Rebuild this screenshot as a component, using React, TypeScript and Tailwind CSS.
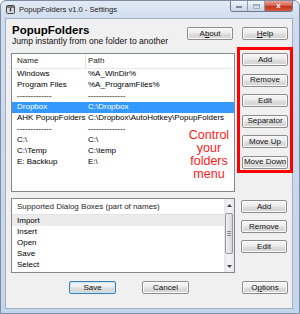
import type { ReactNode } from 'react';

const folders: [string, string][] = [
  ['Windows', '%A_WinDir%'],
  ['Program Files', '%A_ProgramFiles%'],
  ['-------------', '--------------'],
  ['Dropbox', 'C:\\Dropbox'],
  ['AHK PopupFolders', 'C:\\Dropbox\\AutoHotkey\\PopupFolders'],
  ['-------------', '--------------'],
  ['C:\\', 'C:\\'],
  ['C:\\Temp', 'C:\\temp'],
  ['E: Backkup', 'E:\\'],
];

const dialogs = ['Import', 'Insert', 'Open', 'Save', 'Select', 'Upload'];

function Btn({ children, className = '', primary = false }: { children: ReactNode; className?: string; primary?: boolean }) {
  return (
    <div
      className={`flex h-[13px] w-[46px] shrink-0 items-center justify-center rounded-[2px] border bg-[linear-gradient(#f6f6f6,#ececec_48%,#dedede_52%,#d2d2d2)] text-[8px] leading-none text-[#111] ${
        primary ? 'border-[#3c7fb1] shadow-[inset_0_0_0_1px_#c4e5f6]' : 'border-[#8c8c8c] shadow-[inset_0_0_0_1px_#fafafa]'
      } ${className}`}
    >
      {children}
    </div>
  );
}

function AppIcon() {
  return (
    <svg width="9" height="9" viewBox="0 0 9 9">
      <rect x="0.5" y="0.5" width="8" height="8" rx="1" fill="#d9d9d9" stroke="#444" />
      <rect x="1" y="1" width="7" height="2" fill="#7b7b7b" />
      <path d="M2.5 4.2 L4.5 4.2 L4.5 3.6 L6.5 4.8 L4.5 6 L4.5 5.4 L2.5 5.4 Z" fill="#333" transform="rotate(90 4.5 4.8)" />
    </svg>
  );
}

export default function App() {
  return (
    <div className="h-[314px] w-[300px] bg-white font-['Liberation_Sans',Arial,sans-serif] text-black">
      <div className="flex h-full w-full flex-col rounded-t-[6px] border border-[#7d8da4] bg-[linear-gradient(180deg,#e2eaf5_0px,#cfdced_18px,#c4d6eb_100%)]">
        {/* title bar */}
        <div className="flex h-[17px] shrink-0 items-center pl-[5px] pr-[6px]">
          <AppIcon />
          <span className="ml-[4px] text-[7.6px] leading-none text-[#1a1a1a]">PopupFolders v1.0 - Settings</span>
          <div className="ml-auto flex h-[11px] self-start overflow-hidden rounded-b-[3px] border border-t-0 border-[#6a7890]">
            <div className="flex w-[17px] items-end justify-center border-r border-[#8e9cb1] bg-[linear-gradient(#f1f5fa,#dbe4ef_50%,#cbd7e6)] pb-[3px]">
              <div className="h-[2px] w-[6px] border border-[#7d8898] bg-white" />
            </div>
            <div className="flex w-[17px] items-center justify-center border-r border-[#8e9cb1] bg-[linear-gradient(#f1f5fa,#dbe4ef_50%,#cbd7e6)]">
              <div className="h-[5px] w-[7px] border border-[#a4afbe] border-t-2" />
            </div>
            <div className="flex w-[27px] items-center justify-center bg-[linear-gradient(#e9a79b,#d4614f_45%,#c1351f_55%,#d65a3e)] text-[8px] font-bold leading-none text-white">
              x
            </div>
          </div>
        </div>

        {/* client area */}
        <div className="mb-[4px] ml-[4px] mr-[6px] flex flex-1 flex-col border border-[#9fb0c5] bg-[#f0f0f0] pl-[5px] pr-[4px]">
          <div className="flex h-[34px] shrink-0 justify-between">
            <div className="pl-[1px]">
              <div className="mt-[5px] text-[11.5px] font-bold leading-[12px]">PopupFolders</div>
              <div className="text-[8.6px] leading-[10px] text-[#111]">Jump instantly from one folder to another</div>
            </div>
            <div className="flex gap-[9px] pt-[8px]">
              <Btn className="h-[12px] w-[23px]">
                A<span className="underline">b</span>out
              </Btn>
              <Btn className="h-[12px]">
                <span className="underline">H</span>elp
              </Btn>
            </div>
          </div>

          {/* folders list */}
          <div className="flex h-[139px] shrink-0 items-start gap-[7px]">
            <div className="relative h-full w-[224px] overflow-hidden border border-[#828790] bg-white text-[8px] leading-none">
              <div className="flex h-[14.5px] items-center border-b border-[#e8e8e8] text-[#1e1e1e]">
                <div className="w-[73px] pl-[5px]">Name</div>
                <div className="h-full w-px bg-[#e3e3e3]" />
                <div className="pl-[2px]">Path</div>
              </div>
              {folders.map(([name, path], i) => (
                <div
                  key={i}
                  className={`flex h-[11px] items-center whitespace-nowrap ${i === 3 ? 'bg-[#3399ff] text-white' : ''}`}
                >
                  <div className="w-[76px] shrink-0 pl-[5px]">{name}</div>
                  <div>{path}</div>
                </div>
              ))}
              <div className="absolute left-[170px] top-[75px] w-[54px] text-center text-[12.5px] leading-[13px] text-[#ff1a1a]">
                Control your folders menu
              </div>
            </div>
            <div className="relative flex flex-col gap-[7.5px]">
              <div className="absolute -bottom-[4.5px] -left-[5px] -right-[5px] -top-[6px] border-[3px] border-[#ff0000]" />
              <Btn>Add</Btn>
              <Btn>Remove</Btn>
              <Btn>Edit</Btn>
              <Btn>Separator</Btn>
              <Btn>Move Up</Btn>
              <Btn>Move Down</Btn>
            </div>
          </div>

          {/* dialogs list */}
          <div className="mt-[6px] flex h-[75px] shrink-0 gap-[6px]">
            <div className="flex w-[224px] overflow-hidden border border-[#828790] bg-white text-[8px] leading-none">
              <div className="flex-1 overflow-hidden">
                <div className="flex h-[16px] items-center border-b border-[#e3e3e3] pl-[5px] text-[#1e1e1e]">
                  Supported Dialog Boxes (part of names)
                </div>
                {dialogs.map((d, i) => (
                  <div key={d} className={`flex h-[11px] items-center pl-[5px] ${i === 0 ? 'bg-[#ebebeb]' : ''}`}>
                    {d}
                  </div>
                ))}
              </div>
              <div className="flex w-[10px] flex-col bg-[linear-gradient(90deg,#e6e6e6,#f5f5f5_50%,#e6e6e6)]">
                <div className="flex h-[12px] items-center justify-center">
                  <svg width="5" height="3" viewBox="0 0 5 3">
                    <path d="M0 3 L2.5 0 L5 3 Z" fill="#444" />
                  </svg>
                </div>
                <div className="mx-[1px] mt-[2px] flex h-[41px] flex-col items-center justify-center gap-[1px] rounded-[2px] border border-[#9a9a9a] bg-[linear-gradient(90deg,#f3f3f3,#e3e3e3_50%,#d6d6d6)]">
                  <div className="h-px w-[4px] bg-[#8a8a8a]" />
                  <div className="h-px w-[4px] bg-[#8a8a8a]" />
                  <div className="h-px w-[4px] bg-[#8a8a8a]" />
                </div>
                <div className="mt-auto flex h-[12px] items-center justify-center">
                  <svg width="5" height="3" viewBox="0 0 5 3">
                    <path d="M0 0 L2.5 3 L5 0 Z" fill="#444" />
                  </svg>
                </div>
              </div>
            </div>
            <div className="flex flex-col gap-[7px] pt-[2px]">
              <Btn>Add</Btn>
              <Btn>Remove</Btn>
              <Btn>Edit</Btn>
            </div>
          </div>

          {/* bottom buttons */}
          <div className="mt-[8px] flex shrink-0">
            <Btn primary className="ml-[58px] w-[47px]">
              Save
            </Btn>
            <Btn className="ml-[26px] w-[47px]">Cancel</Btn>
            <Btn className="ml-auto">
              O<span className="underline">p</span>tions
            </Btn>
          </div>
        </div>
      </div>
    </div>
  );
}
